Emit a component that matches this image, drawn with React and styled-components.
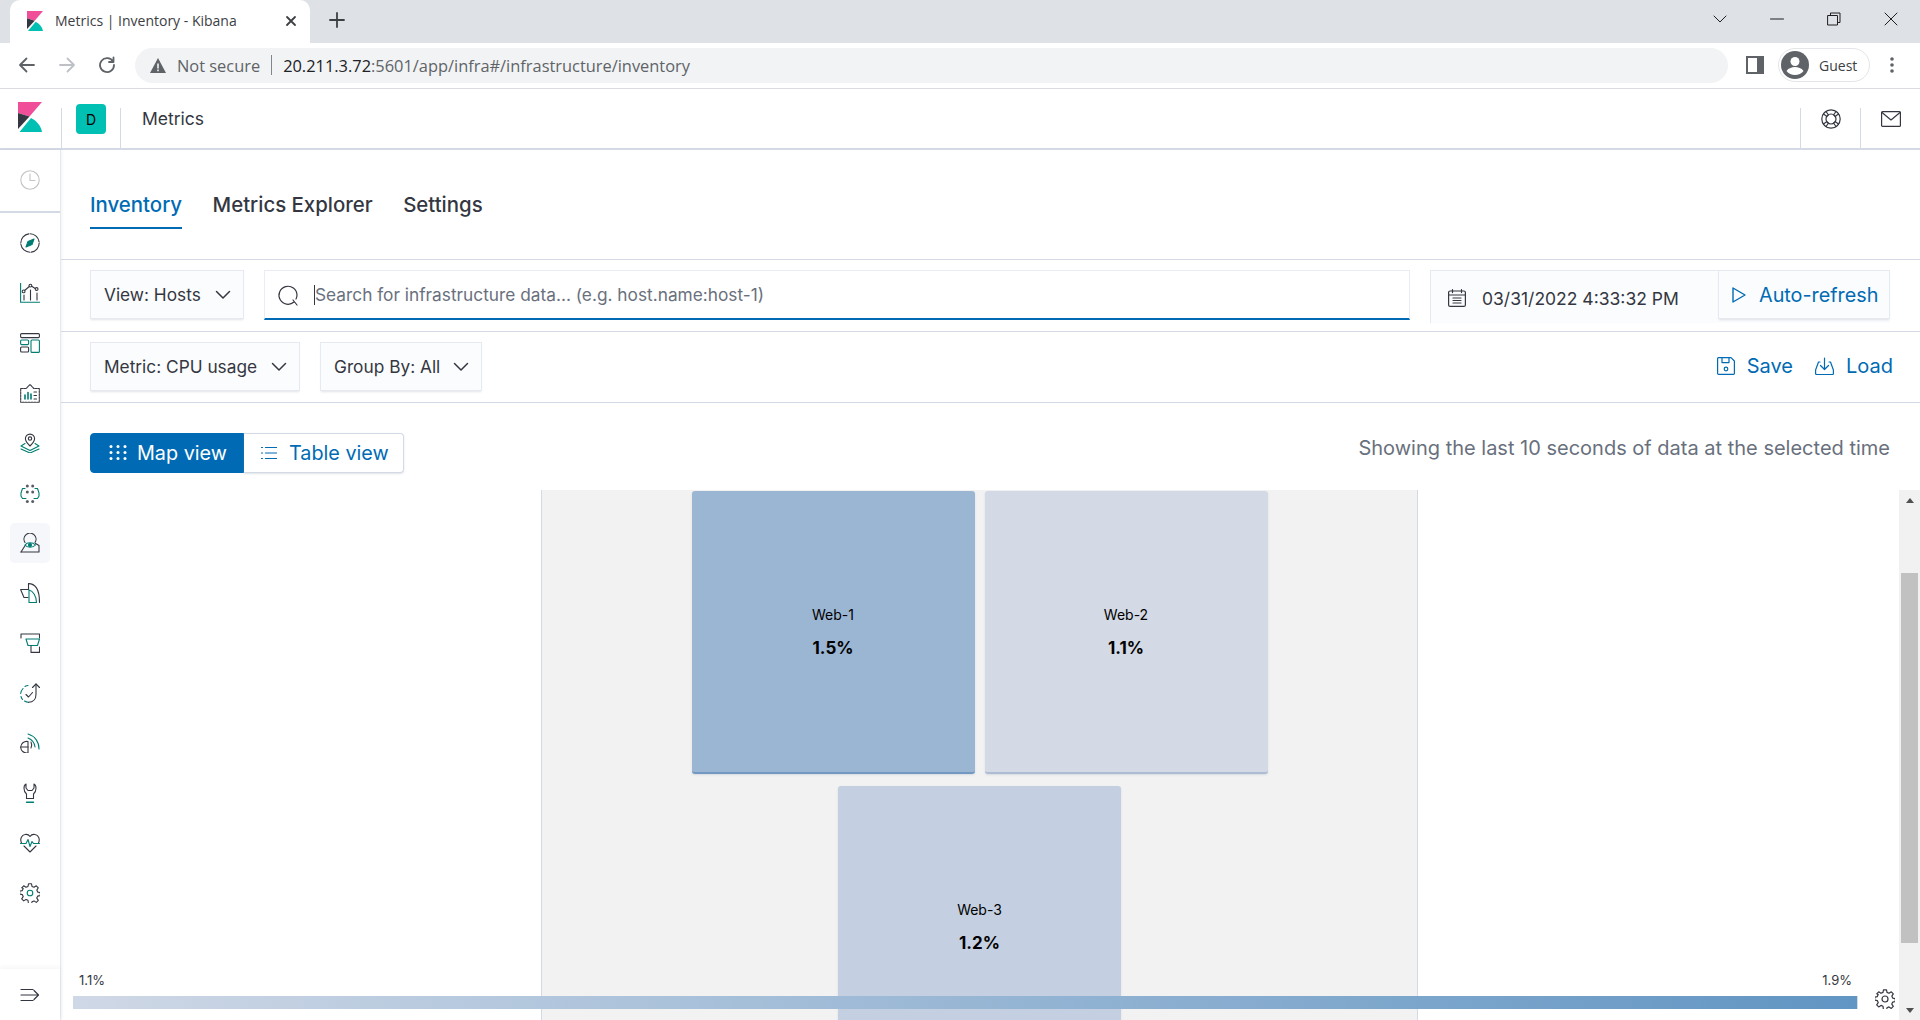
import React from "react";
import styled, { createGlobalStyle } from "styled-components";

const GlobalStyle = createGlobalStyle`
  html, body { margin: 0; padding: 0; height: 100%; background: #fff; overflow: hidden; }
  * { box-sizing: border-box; }
  body { font-family: Inter, "Liberation Sans", sans-serif; color: #343741; }
`;

const Page = styled.div`
  width: 1920px;
  height: 1020px;
  display: flex;
  flex-direction: column;
  overflow: hidden;
`;

/* browser chrome */
const TabStrip = styled.div`
  height: 43px;
  background: #dee1e6;
  display: flex;
  align-items: flex-end;
  padding-left: 10px;
  font-family: "Open Sans", "Liberation Sans", sans-serif;
`;

const BrowserTab = styled.div`
  width: 300px;
  height: 43px;
  background: #fff;
  border-radius: 10px 10px 0 0;
  display: flex;
  align-items: center;
  padding: 0 13px 2px 17px;
  font-size: 14px;
  color: #3c4043;
`;

const TabTitle = styled.span`
  margin-left: 12px;
  flex: 1;
  white-space: nowrap;
`;

const NewTab = styled.div`
  margin: 0 0 2px 19px;
  height: 43px;
  display: flex;
  align-items: center;
`;

const WindowControls = styled.div`
  margin-left: auto;
  height: 43px;
  display: flex;
  align-items: center;
  padding: 0 22px 5px 0;
  gap: 43px;
  color: #1f1f1f;
`;

const Toolbar = styled.div`
  height: 46px;
  border-bottom: 1px solid #dadce0;
  display: flex;
  align-items: center;
  padding: 0 18px 1px 17px;
  font-family: "Open Sans", "Liberation Sans", sans-serif;
`;

const NavButtons = styled.div`
  width: 118px;
  display: flex;
  gap: 20px;
`;

const AddressBar = styled.div`
  width: 1593px;
  height: 35px;
  border-radius: 18px;
  background: #f1f3f4;
  display: flex;
  align-items: center;
  padding-left: 15px;
  font-size: 16.4px;
  color: #5f6368;
  white-space: nowrap;
`;

const NotSecure = styled.span`
  margin-left: 11px;
`;

const Pipe = styled.span`
  width: 1px;
  height: 20px;
  margin: 0 11px;
  background: #80868b;
`;

const UrlHost = styled.span`
  color: #202124;
`;

const SidePanelIcon = styled.div`
  margin-left: 18px;
  display: flex;
`;

const GuestPill = styled.div`
  width: 92px;
  height: 34px;
  margin-left: 14px;
  border: 1px solid #e3e5e8;
  border-radius: 17px;
  display: flex;
  align-items: center;
  padding-left: 2px;
  gap: 10px;
  font-size: 14px;
  color: #3c4043;
`;

const MenuDots = styled.div`
  margin-left: 20px;
  display: flex;
`;

/* kibana header */
const AppHeader = styled.header`
  height: 61px;
  border-bottom: 2px solid #d3dae6;
  display: flex;
  align-items: stretch;
`;

const LogoCell = styled.div`
  width: 61px;
  padding: 13px 0 0 18px;
`;

const HeaderCell = styled.div`
  margin-top: 19px;
  border-left: 1px solid #d3dae6;
  display: flex;
  justify-content: center;
  padding-top: 0;
  width: ${(p) => p.$width}px;
`;

const SpaceBadge = styled.div`
  width: 30px;
  height: 30px;
  margin-top: -4px;
  border-radius: 4px;
  background: #00bfb3;
  display: flex;
  align-items: center;
  justify-content: center;
  font-size: 14px;
  color: #000;
`;

const Crumb = styled.div`
  margin: 19px 0 0 21px;
  font-size: 17.5px;
  line-height: 22px;
  flex: 1;
`;

/* body */
const Body = styled.div`
  flex: 1;
  min-height: 0;
  display: flex;
`;

const Sidebar = styled.nav`
  width: 61px;
  flex: none;
  display: flex;
  flex-direction: column;
  border-right: 1px solid #e4e8ef;
  box-shadow: 1px 0 3px rgba(52, 55, 65, 0.06);
`;

const RecentSection = styled.div`
  height: 63px;
  flex: none;
  border-bottom: 2px solid #d3dae6;
  display: flex;
  align-items: center;
  justify-content: center;
  padding-bottom: 2px;
  margin-bottom: 5px;
`;

const NavItem = styled.div`
  height: 50px;
  flex: none;
  display: flex;
  align-items: center;
  justify-content: center;
`;

const NavIconWrap = styled.div`
  width: 40px;
  height: 40px;
  border-radius: 5px;
  display: flex;
  align-items: center;
  justify-content: center;
  background: ${(p) => (p.$active ? "#f5f7fa" : "transparent")};
`;

const SidebarFooter = styled.div`
  margin-top: auto;
  height: 51px;
  box-shadow: 0 -2px 4px rgba(52, 55, 65, 0.05);
  display: flex;
  align-items: center;
  justify-content: center;
`;

const Main = styled.main`
  flex: 1;
  min-width: 0;
  display: flex;
  flex-direction: column;
`;

const TabBar = styled.div`
  height: 110px;
  flex: none;
  border-bottom: 1px solid #d3dae6;
  display: flex;
  align-items: flex-start;
  gap: 30.5px;
  padding: 30px 0 0 29px;
`;

const PageTab = styled.div`
  height: 49px;
  font-size: 20.4px;
  line-height: 49px;
  font-weight: 500;
  color: ${(p) => (p.$active ? "#006bb4" : "#343741")};
  border-bottom: 2px solid ${(p) => (p.$active ? "#006bb4" : "transparent")};
`;

const ControlRow = styled.div`
  height: ${(p) => p.$height}px;
  flex: none;
  border-bottom: 1px solid #d3dae6;
  display: flex;
  align-items: flex-start;
  padding: 10px 30px 0 29px;
`;

const SelectButton = styled.div`
  width: ${(p) => p.$width}px;
  margin-right: ${(p) => p.$gap}px;
  height: 49px;
  flex: none;
  background: #fbfcfd;
  border: 1px solid #e6e9f0;
  box-shadow: 0 2px 2px -1px rgba(152, 162, 179, 0.3);
  display: flex;
  align-items: center;
  justify-content: space-between;
  padding: 0 12px 0 13px;
  font-size: 17.3px;
  color: #343741;
  white-space: nowrap;
`;

const SearchBox = styled.div`
  width: 1146px;
  height: 50px;
  flex: none;
  background: #fff;
  border: 1px solid #e9edf3;
  border-bottom: 2px solid #006bb4;
  display: flex;
  align-items: center;
  padding-left: 12px;
  font-size: 17.3px;
  color: #69707d;
  white-space: nowrap;
`;

const Caret = styled.span`
  width: 1px;
  height: 20px;
  margin-left: 15px;
  background: #343741;
`;

const DateGroup = styled.div`
  margin-left: 20px;
  width: 460px;
  height: 53px;
  flex: none;
  display: flex;
  background: #fbfcfd;
  border-left: 1px solid #e6e9f0;
  box-shadow: inset 0 1px 0 #e6e9f0;
`;

const DateValue = styled.div`
  flex: 1;
  display: flex;
  align-items: center;
  gap: 16px;
  padding: 3px 0 0 17px;
  font-size: 17.5px;
  color: #343741;
  white-space: nowrap;
`;

const RefreshButton = styled.div`
  width: 172px;
  height: 49px;
  background: #fbfcfd;
  border: 1px solid #e6e9f0;
  box-shadow: 0 2px 2px -1px rgba(152, 162, 179, 0.3);
  display: flex;
  align-items: center;
  gap: 13px;
  padding-left: 13px;
  font-size: 19.8px;
  color: #006bb4;
`;

const LinkActions = styled.div`
  margin: 8px -3px 0 auto;
  display: flex;
  gap: 22px;
`;

const LinkAction = styled.div`
  display: flex;
  align-items: center;
  gap: 12px;
  height: 32px;
  font-size: 20px;
  color: #006bb4;
`;

const ViewRow = styled.div`
  height: 87px;
  flex: none;
  display: flex;
  justify-content: space-between;
  align-items: flex-start;
  padding: 30px 30px 0 29px;
`;

const ToggleGroup = styled.div`
  display: flex;
  height: 40px;
`;

const Toggle = styled.div`
  width: ${(p) => p.$width}px;
  display: flex;
  align-items: center;
  gap: ${(p) => p.$gap}px;
  padding-left: ${(p) => p.$pad}px;
  font-size: 19.8px;
  color: ${(p) => (p.$on ? "#fff" : "#006bb4")};
  background: ${(p) => (p.$on ? "#006bb4" : "#fff")};
  border: 1px solid ${(p) => (p.$on ? "#006bb4" : "#d3dae6")};
  border-left-width: ${(p) => (p.$on ? "1px" : "0")};
  border-radius: ${(p) => (p.$on ? "4px 0 0 4px" : "0 4px 4px 0")};
  box-shadow: ${(p) => (p.$on ? "none" : "0 1px 2px rgba(152, 162, 179, 0.3)")};
`;

const TimeNote = styled.div`
  font-size: 20px;
  line-height: 30px;
  color: #69707d;
  white-space: nowrap;
`;

const MapArea = styled.div`
  flex: 1;
  min-height: 0;
  position: relative;
  display: flex;
  overflow: hidden;
`;

const MapCanvas = styled.div`
  flex: 1;
  min-width: 0;
  display: flex;
  justify-content: center;
`;

const GroupPanel = styled.div`
  width: 877px;
  height: 640px;
  flex: none;
  margin-left: -1px;
  background: #f2f2f2;
  border-left: 1px solid #d3dae6;
  border-right: 1px solid #d3dae6;
  padding: 1px 149px 0;
  display: flex;
  flex-wrap: wrap;
  align-content: flex-start;
  justify-content: center;
  gap: 12px 10px;
`;

const Tile = styled.div`
  width: 283px;
  height: 283px;
  border-radius: 3px;
  background: ${(p) => p.$bg};
  border-bottom: 2px solid ${(p) => p.$edge};
  box-shadow: 0 1px 2px rgba(152, 162, 179, 0.3);
  display: flex;
  flex-direction: column;
  align-items: center;
  justify-content: center;
  gap: 13px;
  padding-top: 2px;
  color: #000;
`;

const TileName = styled.div`
  font-size: 14px;
  line-height: 18px;
`;

const TileValue = styled.div`
  font-size: 17px;
  line-height: 22px;
  font-weight: 700;
`;

const Scrollbar = styled.div`
  width: 21px;
  flex: none;
  background: #f1f1f1;
  display: flex;
  flex-direction: column;
  align-items: center;
  padding-top: 83px;
`;

const ScrollThumb = styled.div`
  width: 17px;
  height: 370px;
  background: #c1c1c1;
`;

const ScrollArrow = styled.div`
  position: absolute;
  right: 6px;
  width: 0;
  height: 0;
  border-left: 4.5px solid transparent;
  border-right: 4.5px solid transparent;
  ${(p) => (p.$up ? "top: 8px; border-bottom: 5px solid #505050;" : "bottom: 7px; border-top: 5px solid #505050;")}
`;

/* legend sits over the map at the bottom */
const Legend = styled.div`
  position: absolute;
  left: 12px;
  bottom: 11px;
  width: 1785px;
`;

const LegendLabels = styled.div`
  display: flex;
  justify-content: space-between;
  padding: 0 6px 8px 6px;
  font-size: 13px;
  line-height: 16px;
  color: #343741;
`;

const LegendBar = styled.div`
  height: 13px;
  background: linear-gradient(to right, #cfd8e6, #6195c3);
  border-right: 1px solid #d3dae6;
`;

const LegendGear = styled.div`
  position: absolute;
  right: 25px;
  bottom: 11px;
  display: flex;
`;

/* icons */
const Stroke = styled.svg`
  display: block;
  flex: none;
  fill: none;
  stroke: ${(p) => p.$color || "currentColor"};
  stroke-width: ${(p) => p.$sw || 1.5};
  stroke-linecap: round;
  stroke-linejoin: round;
`;

const KibanaLogo = ({ w, h }) => (
  <svg width={w} height={h} viewBox="0 0 24 30" style={{ display: "block", flex: "none" }}>
    <path fill="#f04e98" d="M0 0h24L11.5 14.5 0 11z" />
    <path fill="#343741" d="M0 11l11.5 3.5L0 27z" />
    <path fill="#00bfb3" d="M1.5 30L13 16c6 3 10 8 11 14z" />
  </svg>
);

const Chevron = ({ color = "#343741" }) => (
  <Stroke $color={color} width="16" height="16" viewBox="0 0 16 16">
    <path d="M1.5 4.5L8 11l6.5-6.5" />
  </Stroke>
);

const dark = "#343741";
const teal = "#017d73";
const dot = "#5a5d66";

const NavGlyph = ({ children }) => (
  <svg width="20" height="20" viewBox="0 0 20 20" fill="none" strokeWidth="1.1" strokeLinecap="round" strokeLinejoin="round" style={{ display: "block" }}>
    {children}
  </svg>
);

const gearPath =
  "M8.5.8h3l.5 2.6 2 .9 2.3-1.500 2 2-1.500 2.300.9 2 2.600.5v3l-2.600.5-.9 2 1.500 2.300-2 2-2.300-1.500-2 .9-.5 2.600h-3L8 17.300l-2-.9-2.300 1.500-2-2 1.500-2.300-.9-2-2.600-.5v-3l2.600-.5.9-2L1.700 4.800l2-2L6 4.300l2-.9z";

const navIcons = [
  <NavGlyph key="discover">
    <circle cx="10" cy="10" r="9.2" stroke={dark} strokeDasharray="13 1.4" />
    <path d="M14 6l-6 2.4L6 14l6-2.4z" fill={teal} stroke={teal} />
  </NavGlyph>,
  <NavGlyph key="visualize">
    <path d="M.6 0v19.2h19" stroke={teal} />
    <path d="M4 8L10.5 2.5l5.5 3.5" stroke={dark} />
    <circle cx="3.6" cy="8.4" r="1.4" stroke={dark} fill="#fff" />
    <circle cx="10.4" cy="2.6" r="1.4" stroke={dark} fill="#fff" />
    <circle cx="16.6" cy="6" r="1.4" stroke={dark} fill="#fff" />
    <path d="M4 12v5M10.5 7v10M17 10v7" stroke={dark} />
  </NavGlyph>,
  <NavGlyph key="dashboard">
    <rect x=".6" y=".6" width="18.8" height="4" rx="1" stroke={dark} />
    <rect x=".6" y="7" width="8" height="4.6" rx="1" stroke={teal} />
    <rect x=".6" y="14" width="8" height="5" rx="1" stroke={dark} />
    <rect x="11" y="7" width="8.4" height="12.4" rx="1" stroke={teal} />
  </NavGlyph>,
  <NavGlyph key="canvas">
    <path d="M.7 5.5h5.5L10 1.5l3.8 4h5.5v13.8H.7z" stroke={dark} strokeDasharray="2 1" />
    <path d="M5 12v4M8 9.5V16M11 11v5" stroke={teal} strokeWidth="1.6" />
    <path d="M14 9h2.5M14 12.5h2.5M14 16h2.5" stroke={dark} />
  </NavGlyph>,
  <NavGlyph key="maps">
    <path d="M10 13c-3-3-4.600-5-4.600-7.300a4.600 4.600 0 119.200 0C14.600 8 13 10 10 13z" stroke={dark} />
    <circle cx="10" cy="5.600" r="1.700" stroke={dark} />
    <path d="M5 10.500L1 13l9 4.500 9-4.500-4-2.500" stroke={teal} />
    <path d="M1 16l9 4 9-4" stroke={teal} />
  </NavGlyph>,
  <NavGlyph key="ml">
    {[3, 9, 18.5].flatMap((y) =>
      [7.3, 12.7].map((x) => <circle key={`${x}-${y}`} cx={x} cy={y} r="1.500" fill={dot} />)
    )}
    <path d="M5 5.500H2.500L1 10v3l1.500 2.500H6M15 5.500h2.500L19 10v3l-1.500 2.500H14" stroke={teal} />
  </NavGlyph>,
  <NavGlyph key="metrics">
    <path d="M1 19h18v-6.500l-3.500-2" stroke={dark} />
    <path d="M1 19l4.500-7" stroke={dark} />
    <path d="M5 9.500a6 6 0 1 1 10 0" stroke={dark} />
    <path d="M5 12c2-3 8-3 10.500 0-2.500 3-8.500 3-10.500 0z" stroke={teal} />
    <circle cx="10" cy="12" r="1.500" fill={teal} stroke={teal} />
  </NavGlyph>,
  <NavGlyph key="logs">
    <path d="M8.500.6C14 .6 19.500 5 19.500 19.500" stroke={dark} />
    <path d="M8.500.6V6.500H.6l3.400 8h4" stroke={dark} />
    <path d="M9 7c4 1 7.500 6 7.500 12.500H9z" stroke={teal} />
  </NavGlyph>,
  <NavGlyph key="apm">
    <path d="M1 5V1h18.500v4" stroke={dark} />
    <path d="M6 6h13.500l-2 6.500H8z" stroke={teal} />
    <path d="M11 13v6.400h8.500V14" stroke={dark} />
  </NavGlyph>,
  <NavGlyph key="uptime">
    <path d="M3 5.500a9 9 0 0 0-2.300 5M1 13.500a9 9 0 0 0 1.500 3M4.500 18a8 8 0 0 0 4 1.200M5 3.500a8 8 0 0 1 3-1" stroke={teal} />
    <path d="M8.500 19.200c5 0 7.500-3.500 7.500-8V1" stroke={dark} />
    <path d="M12.500 4.500L16 1l3.500 3.500" stroke={dark} />
    <path d="M6 11.500l2.500 2.500 4-4.500" stroke={dark} />
  </NavGlyph>,
  <NavGlyph key="siem">
    <path d="M8 8.500a6 6 0 0 0-7.300 6 6 6 0 0 0 6.300 5.500H8z" stroke={dark} />
    <path d="M.7 14H8" stroke={dark} />
    <path d="M8 5a11 11 0 0 1 7 9M8 1a15 15 0 0 1 11 15" stroke={teal} />
    <path d="M11 9a7 7 0 0 1 0 6" stroke={dark} />
  </NavGlyph>,
  <NavGlyph key="devtools">
    <path d="M6 1C3.500 2 3 8 6.500 11v4.500h7V11C17 8 16.500 2 14 1v4l-2 2.500H8L6 5z" stroke={dark} />
    <path d="M6.500 19.200h7" stroke={teal} strokeWidth="1.400" />
  </NavGlyph>,
  <NavGlyph key="monitoring">
    <path d="M1.500 10C-.5 5.500 2 2 5 1.500 7.500 1 9 2 10 3.500 11 2 12.500 1 15 1.500c3 .5 5.500 4 3.500 8.500" stroke={dark} />
    <path d="M.5 10.500H6L8 6.500l2 7 2-5 1.500 2H19.500" stroke={teal} />
    <path d="M4 13l6 6 6-6" stroke={dark} />
  </NavGlyph>,
  <NavGlyph key="management">
    <path d={gearPath} stroke={dark} />
    <circle cx="10" cy="10" r="2.800" stroke={teal} />
  </NavGlyph>,
];

const Gear = () => (
  <Stroke $color="#343741" $sw={1.2} width="20" height="20" viewBox="0 0 20 20">
    <path d={gearPath} />
    <circle cx="10" cy="10" r="3" />
  </Stroke>
);

const tiles = [
  { name: "Web-1", value: "1.5%", bg: "#9bb6d3", edge: "#7399c3" },
  { name: "Web-2", value: "1.1%", bg: "#d3d9e5", edge: "#aebdd4" },
  { name: "Web-3", value: "1.2%", bg: "#c4d0e1", edge: "#a5b8d1" },
];

export default function App() {
  return (
    <Page>
      <GlobalStyle />

      <TabStrip>
        <BrowserTab>
          <KibanaLogo w={16} h={20} />
          <TabTitle>Metrics | Inventory - Kibana</TabTitle>
          <Stroke $color="#3c4043" $sw={1.8} width="12" height="12" viewBox="0 0 12 12">
            <path d="M2 2l8 8M10 2l-8 8" />
          </Stroke>
        </BrowserTab>
        <NewTab>
          <Stroke $color="#3c4043" $sw={1.8} width="16" height="16" viewBox="0 0 16 16">
            <path d="M8 1v14M1 8h14" />
          </Stroke>
        </NewTab>
        <WindowControls>
          <Stroke $sw={1} width="14" height="14" viewBox="0 0 14 14">
            <path d="M1 4l6 6 6-6" />
          </Stroke>
          <Stroke $sw={1} width="14" height="14" viewBox="0 0 14 14">
            <path d="M0.500 7h13" />
          </Stroke>
          <Stroke $sw={1} width="14" height="14" viewBox="0 0 14 14">
            <path d="M1 3.500h9.500V13H1zM3.500 3.500V1H13v9.500h-2.500" />
          </Stroke>
          <Stroke $sw={1} width="14" height="14" viewBox="0 0 14 14">
            <path d="M1 1l12 12M13 1L1 13" />
          </Stroke>
        </WindowControls>
      </TabStrip>

      <Toolbar>
        <NavButtons>
          <Stroke $color="#5f6368" $sw={1.8} width="20" height="20" viewBox="0 0 20 20">
            <path d="M17 10H3M9.500 3.500L3 10l6.500 6.500" />
          </Stroke>
          <Stroke $color="#bdc1c6" $sw={1.8} width="20" height="20" viewBox="0 0 20 20">
            <path d="M3 10h14M10.500 3.500L17 10l-6.500 6.500" />
          </Stroke>
          <Stroke $color="#5f6368" $sw={1.8} width="20" height="20" viewBox="0 0 20 20">
            <path d="M16 6.500A7 7 0 1 0 17 10M16.500 2.500v4.500H12" />
          </Stroke>
        </NavButtons>
        <AddressBar>
          <svg width="16" height="15" viewBox="0 0 16 15" style={{ display: "block" }}>
            <path fill="#5f6368" d="M8 0l8 15H0zM7.200 5.500v5h1.600v-5zm0 6v1.700h1.600v-1.700z" fillRule="evenodd" />
          </svg>
          <NotSecure>Not secure</NotSecure>
          <Pipe />
          <span>
            <UrlHost>20.211.3.72</UrlHost>:5601/app/infra#/infrastructure/inventory
          </span>
        </AddressBar>
        <SidePanelIcon>
          <svg width="18" height="18" viewBox="0 0 18 18" style={{ display: "block" }}>
            <path fill="#5f6368" fillRule="evenodd" d="M0 0h18v18H0zM2 2v14h9V2z" />
          </svg>
        </SidePanelIcon>
        <GuestPill>
          <svg width="28" height="28" viewBox="0 0 28 28" style={{ display: "block" }}>
            <circle cx="14" cy="14" r="14" fill="#5f6368" />
            <circle cx="14" cy="10.500" r="4.500" fill="#fff" />
            <path fill="#fff" d="M5.500 20c2-3 5.500-4 8.500-4s6.500 1 8.500 4c-2 2.500-5 4-8.500 4s-6.500-1.500-8.500-4z" />
          </svg>
          Guest
        </GuestPill>
        <MenuDots>
          <svg width="4" height="18" viewBox="0 0 4 18" style={{ display: "block" }}>
            <circle cx="2" cy="3" r="1.800" fill="#5f6368" />
            <circle cx="2" cy="9" r="1.800" fill="#5f6368" />
            <circle cx="2" cy="15" r="1.800" fill="#5f6368" />
          </svg>
        </MenuDots>
      </Toolbar>

      <AppHeader>
        <LogoCell>
          <KibanaLogo w={24} h={30} />
        </LogoCell>
        <HeaderCell $width={59}>
          <SpaceBadge>D</SpaceBadge>
        </HeaderCell>
        <HeaderCell $width={1} />
        <Crumb>Metrics</Crumb>
        <HeaderCell $width={60}>
          <Stroke $color="#343741" $sw={1.2} width="20" height="20" viewBox="0 0 20 20" style={{ marginTop: 1 }}>
            <circle cx="10" cy="10" r="9.200" />
            <circle cx="10" cy="10" r="5" />
            <path d="M5 2.500l2.500 3.500M2.500 5L6 7.500M15 2.500L12.500 6M17.500 5L14 7.500M5 17.500L7.500 14M2.500 15L6 12.500M15 17.500L12.500 14M17.500 15L14 12.500" />
          </Stroke>
        </HeaderCell>
        <HeaderCell $width={60}>
          <Stroke $color="#343741" $sw={1.2} width="20" height="16" viewBox="0 0 20 16" style={{ marginTop: 3 }}>
            <rect x=".6" y=".6" width="18.800" height="14.800" rx="1" />
            <path d="M1 1.500l9 7.500 9-7.500" />
          </Stroke>
        </HeaderCell>
      </AppHeader>

      <Body>
        <Sidebar>
          <RecentSection>
            <Stroke $color="#c2c3c6" $sw={1.1} width="20" height="20" viewBox="0 0 20 20">
              <circle cx="10" cy="10" r="9.200" />
              <path d="M10 4v6.500h5" />
            </Stroke>
          </RecentSection>
          {navIcons.map((icon, i) => (
            <NavItem key={i}>
              <NavIconWrap $active={i === 6}>{icon}</NavIconWrap>
            </NavItem>
          ))}
          <SidebarFooter>
            <Stroke $color="#343741" $sw={1.2} width="20" height="14" viewBox="0 0 20 14">
              <path d="M1 1.500h12M1 7h17M1 12.500h12M14 2.500L18.500 7 14 11.500" />
            </Stroke>
          </SidebarFooter>
        </Sidebar>

        <Main>
          <TabBar>
            <PageTab $active>Inventory</PageTab>
            <PageTab>Metrics Explorer</PageTab>
            <PageTab>Settings</PageTab>
          </TabBar>

          <ControlRow $height={72}>
            <SelectButton $width={154} $gap={20}>
              View: Hosts
              <Chevron />
            </SelectButton>
            <SearchBox>
              <Stroke $color="#343741" $sw={1.2} width="22" height="22" viewBox="0 0 22 22">
                <path d="M17 18a9 9 0 1 1 3-7c0 1.500-.4 3-1 4M16 16l4 5" />
              </Stroke>
              <Caret />
              Search for infrastructure data... (e.g. host.name:host-1)
            </SearchBox>
            <DateGroup>
              <DateValue>
                <Stroke $color="#343741" $sw={1.2} width="18" height="18" viewBox="0 0 18 18">
                  <rect x=".6" y="2" width="16.800" height="15.400" rx="1.500" />
                  <path d="M.6 6h16.800M4.500 .6v3M13.500 .6v3M5 9h8M5 11.500h8M5 14h8" />
                </Stroke>
                03/31/2022 4:33:32 PM
              </DateValue>
              <RefreshButton>
                <Stroke $color="#006bb4" $sw={1.4} width="14" height="16" viewBox="0 0 14 16">
                  <path d="M1 1l12 7-12 7z" />
                </Stroke>
                Auto-refresh
              </RefreshButton>
            </DateGroup>
          </ControlRow>

          <ControlRow $height={71}>
            <SelectButton $width={210} $gap={20}>
              Metric: CPU usage
              <Chevron />
            </SelectButton>
            <SelectButton $width={162} $gap={0}>
              Group By: All
              <Chevron />
            </SelectButton>
            <LinkActions>
              <LinkAction>
                <Stroke $color="#006bb4" $sw={1.2} width="18" height="18" viewBox="0 0 18 18">
                  <path d="M.6 1.500A1 1 0 0 1 1.500.6h12.500l3.400 3.400v12.500a1 1 0 0 1-.9.9H1.500a1 1 0 0 1-.9-.9z" />
                  <path d="M5 .6v5h7v-5" />
                  <circle cx="9" cy="12" r="1.800" />
                </Stroke>
                Save
              </LinkAction>
              <LinkAction>
                <Stroke $color="#006bb4" $sw={1.2} width="19" height="18" viewBox="0 0 19 18">
                  <path d="M9.500 1v11M5.500 8.500l4 4 4-4" />
                  <path d="M5 5H3.500L.6 13v3.500a1 1 0 0 0 1 1h15.800a1 1 0 0 0 1-1V13L15.500 5H14" />
                </Stroke>
                Load
              </LinkAction>
            </LinkActions>
          </ControlRow>

          <ViewRow>
            <ToggleGroup>
              <Toggle $on $width={154} $pad={18} $gap={10}>
                <svg width="18" height="16" viewBox="0 0 18 16" style={{ display: "block" }}>
                  {[1.5, 7.5, 13.5].flatMap((y) =>
                    [2, 9, 16].map((x) => <circle key={`${x}-${y}`} cx={x} cy={y} r="1.500" fill="#fff" />)
                  )}
                </svg>
                Map view
              </Toggle>
              <Toggle $width={160} $pad={17} $gap={12}>
                <Stroke $color="#006bb4" $sw={1.2} width="16" height="14" viewBox="0 0 16 14">
                  <path d="M.5 1.500h1M.5 7h1M.5 12.500h1M4.500 1.500H16M4.500 7H16M4.500 12.500H16" />
                </Stroke>
                Table view
              </Toggle>
            </ToggleGroup>
            <TimeNote>Showing the last 10 seconds of data at the selected time</TimeNote>
          </ViewRow>

          <MapArea>
            <MapCanvas>
              <GroupPanel>
                {tiles.map((t) => (
                  <Tile key={t.name} $bg={t.bg} $edge={t.edge}>
                    <TileName>{t.name}</TileName>
                    <TileValue>{t.value}</TileValue>
                  </Tile>
                ))}
              </GroupPanel>
            </MapCanvas>
            <Scrollbar>
              <ScrollArrow $up />
              <ScrollThumb />
              <ScrollArrow />
            </Scrollbar>
            <Legend>
              <LegendLabels>
                <span>1.1%</span>
                <span>1.9%</span>
              </LegendLabels>
              <LegendBar />
            </Legend>
            <LegendGear>
              <Gear />
            </LegendGear>
          </MapArea>
        </Main>
      </Body>
    </Page>
  );
}
